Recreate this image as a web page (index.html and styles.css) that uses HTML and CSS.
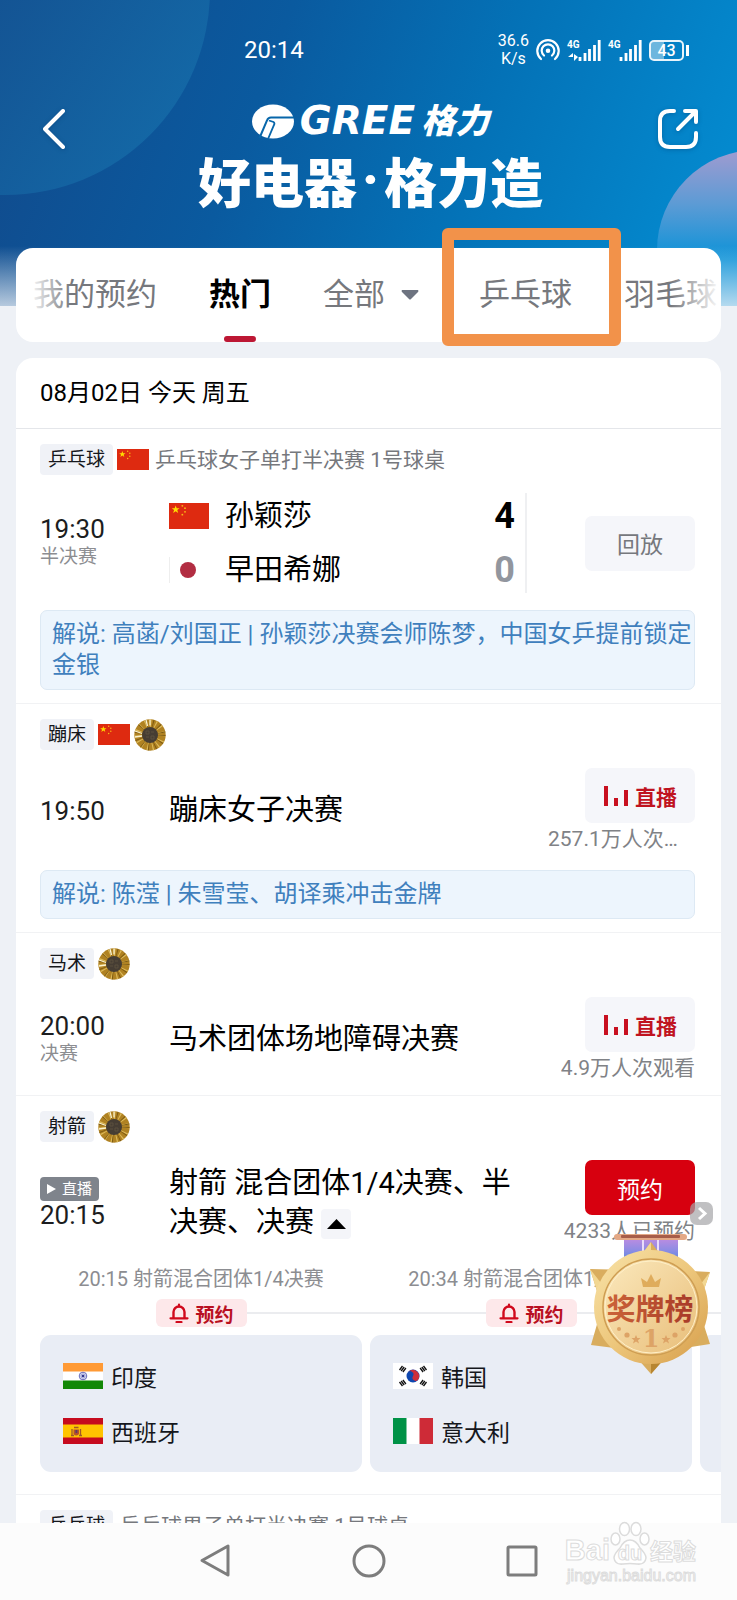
FILE: index.html
```html
<!DOCTYPE html>
<html lang="zh-CN">
<head>
<meta charset="utf-8">
<meta name="viewport" content="width=device-width, initial-scale=1">
<title>赛程</title>
<link rel="stylesheet" href="styles.css">
</head>
<body>
<svg class="defs" aria-hidden="true">
  <defs>
    <symbol id="flag-cn" viewBox="0 0 30 20" preserveAspectRatio="none">
      <rect width="30" height="20" fill="#de2a10"/>
      <path fill="#ffde00" d="M5 2l.75 2.1h2.2L6.2 5.4l.65 2.2L5 6.3 3.150 7.6l.65-2.200L2.050 4.100h2.200z"/>
      <circle cx="10" cy="2.200" r=".7" fill="#f9b616"/><circle cx="12" cy="4" r=".7" fill="#f9b616"/><circle cx="12" cy="6.800" r=".7" fill="#f9b616"/><circle cx="10" cy="9" r=".7" fill="#f9b616"/>
    </symbol>
    <symbol id="flag-jp" viewBox="0 0 40 26">
      <rect width="40" height="26" fill="#fff"/><path d="M.5 0v26" stroke="#eee"/><circle cx="19" cy="13" r="8" fill="#b22d42"/>
    </symbol>
    <symbol id="flag-in" viewBox="0 0 40 26">
      <rect width="40" height="26" fill="#fff"/><rect width="40" height="8.500" fill="#ff9a35"/><rect y="17.500" width="40" height="8.500" fill="#128807"/>
      <circle cx="20" cy="13" r="3.800" fill="#dfe2f5" stroke="#5c60b5" stroke-width=".9"/><path d="M20 9.500v7M16.500 13h7M17.500 10.500l5 5M22.500 10.500l-5 5" stroke="#6a6ebc" stroke-width=".5"/><circle cx="20" cy="13" r="1.300" fill="#33378f"/>
    </symbol>
    <symbol id="flag-es" viewBox="0 0 40 26">
      <rect width="40" height="26" fill="#ffc400"/><rect width="40" height="6.500" fill="#c60b1e"/><rect y="19.500" width="40" height="6.500" fill="#c60b1e"/>
      <path d="M10.500 11.500h5.500v4.500q-2.800 3-5.500 0z" fill="#b5502c"/><path d="M11 9.500h4.500M9 11v7M17.500 11v7M8 17.500h3M16 17.500h3" stroke="#a0582a" stroke-width="1.300"/><rect x="12.500" y="12" width="1.800" height="3" fill="#5a3b6b"/>
    </symbol>
    <symbol id="flag-kr" viewBox="0 0 40 26">
      <rect width="40" height="26" fill="#fff"/>
      <circle cx="20" cy="13" r="6.500" fill="#0f47af"/><path d="M14.600 9.400A6.500 6.500 0 0 1 25.400 16.600A3.250 3.250 0 0 1 20 13A3.250 3.250 0 0 0 14.600 9.400" fill="#cd2e3a"/>
      <g stroke="#111" stroke-width="1.300"><path d="M6.500 7l3-4M8.200 8l3-4M9.900 9l3-4"/><path d="M27.100 5l3 4M28.800 4l3 4M30.500 3l3 4M6.500 19l3 4M8.200 18l3 4M9.900 17l3 4M27.100 21l3-4M28.800 22l3-4M30.500 23l3-4"/></g>
    </symbol>
    <symbol id="flag-it" viewBox="0 0 40 26">
      <rect width="40" height="26" fill="#fff"/><rect width="13.500" height="26" fill="#009246"/><rect x="26.500" width="13.500" height="26" fill="#ce2b37"/>
    </symbol>
    <symbol id="gold" viewBox="0 0 32 32">
      <circle cx="16" cy="16" r="15.700" fill="#b08222"/>
      <g fill="none" stroke-width="9"><circle cx="16" cy="16" r="11" stroke="#dcb95a" stroke-dasharray="1 3.700"/><circle cx="16" cy="16" r="11" stroke="#7d5a12" stroke-dasharray=".8 5.200"/><path d="M16 .5v6M12 1l1.500 6M1 12l7 2.500M1 18l7-1" stroke="#fbf3cf" stroke-width="1.300"/></g>
      <circle cx="16" cy="16" r="8" fill="#463d33"/><path d="M12 12h3v3h-3zM17 13h3M12 18h3M17 17h3v3h-3z" fill="none" stroke="#5d5240" stroke-width=".9"/>
    </symbol>
    <symbol id="bell" viewBox="0 0 20 20">
      <path d="M4.500 15V9a5.500 5.500 0 0 1 11 0v6" fill="none" stroke="#d0091c" stroke-width="2.400"/><path d="M1.500 15.300h17" stroke="#d0091c" stroke-width="2.200" stroke-linecap="round"/><path d="M10 1.500v2M7.500 19h5" stroke="#d0091c" stroke-width="2.200" stroke-linecap="round"/>
    </symbol>
    <symbol id="bars" viewBox="0 0 26 22">
      <path d="M3 1v20M13 13v8M23 5v16" stroke="#c8101f" stroke-width="4"/>
    </symbol>
  </defs>
</svg>

<div class="screen">
  <header class="hero">
    <svg class="hero-art" viewBox="0 0 737 306" preserveAspectRatio="xMaxYMin slice" aria-hidden="true">
      <defs>
        <linearGradient id="sky" gradientUnits="userSpaceOnUse" x1="0" y1="80" x2="660" y2="330"><stop offset="0" stop-color="#114b8d"/><stop offset=".35" stop-color="#0a5a9f"/><stop offset=".65" stop-color="#0471b6"/><stop offset="1" stop-color="#0489ce"/></linearGradient>
        <linearGradient id="disc" x1="0" y1="0" x2="1" y2=".7"><stop offset=".5" stop-color="#145292"/><stop offset="1" stop-color="#156ba8"/></linearGradient>
        <linearGradient id="bubble" gradientUnits="userSpaceOnUse" x1="0" y1="150" x2="0" y2="260"><stop offset="0" stop-color="#a09bd0"/><stop offset=".5" stop-color="#5b9bd5"/><stop offset="1" stop-color="#0a92d8"/></linearGradient>
        <linearGradient id="fade" x1="0" y1="0" x2="0" y2="1"><stop offset="0" stop-color="#eef2f7" stop-opacity="0"/><stop offset="1" stop-color="#eef2f7" stop-opacity=".75"/></linearGradient>
      </defs>
      <rect width="737" height="306" fill="url(#sky)"/>
      <circle cx="5" cy="-10" r="205" fill="url(#disc)" opacity=".85"/>
      <circle cx="757" cy="250" r="100" fill="url(#bubble)"/>
      <rect y="246" width="737" height="60" fill="url(#fade)"/>
    </svg>
    <div class="status">
      <time>20:14</time>
      <div class="status-icons">
        <span class="speed">36.6<br>K/s</span>
        <svg width="24" height="22" viewBox="0 0 24 22" fill="none" stroke="#fff" stroke-width="2.200" stroke-linecap="round"><path d="M5 20a10.700 10.700 0 1 1 14 0M8 16.500a6.300 6.300 0 1 1 8 0"/><circle cx="12" cy="11.700" r="1.200" fill="#fff"/></svg>
        <span class="signal"><span>4G</span><svg width="34" height="21" viewBox="0 0 34 21" stroke="#fff" stroke-width="2.800"><path d="M13 17v4M18 13v8M22.500 9v12M27.500 5v16M32.200 0v21"/><path d="M1 17h5V13zM7 21V14l4 3z" fill="#fff" stroke="none"/></svg></span>
        <span class="signal"><span>4G</span><svg width="34" height="21" viewBox="0 0 34 21" stroke="#fff" stroke-width="2.800"><path d="M13 17v4M18 13v8M22.500 9v12M27.500 5v16M32.200 0v21"/></svg></span>
        <span class="battery">43</span>
      </div>
    </div>
    <div class="titlebar">
      <button class="icon-btn" aria-label="返回"><svg width="24" height="42" viewBox="0 0 24 42" fill="none" stroke="#fff" stroke-width="4" stroke-linecap="round" stroke-linejoin="round"><path d="M21 3L3 21l18 18"/></svg></button>
      <div class="brand">
        <div class="brand-top">
          <svg width="42" height="35" viewBox="0 0 42 35"><ellipse cx="21" cy="17.500" rx="21" ry="17" fill="#fff"/><path d="M42 13.500H19q-3 0-4 3L7.500 34" fill="none" stroke="#0766aa" stroke-width="2"/><path d="M17 16.500l4.500 1.500q1.500 1 .5 3L16 35" fill="none" stroke="#0766aa" stroke-width="1.800"/></svg>
          <span class="gree">GREE</span><span class="geli">格力</span>
        </div>
        <div class="slogan">好电器<span class="dot">·</span>格力造</div>
      </div>
      <button class="icon-btn" aria-label="分享"><svg width="42" height="42" viewBox="0 0 42 42" fill="none" stroke="#fff" stroke-width="4" stroke-linecap="round" stroke-linejoin="round"><path d="M17 3h-4Q3 3 3 13v16q0 10 10 10h16q10 0 10-10v-4M21 21L38 4M28 3h11v11"/></svg></button>
    </div>
  </header>

  <main class="content">
    <nav class="tabs" aria-label="项目">
      <button class="tab">我的预约</button>
      <button class="tab active">热门</button>
      <button class="tab tab-all">全部<svg width="18" height="10" viewBox="0 0 18 10"><path d="M1 0h16q1 1 0 2l-7 7q-1 1-2 0L1 2Q0 1 1 0" fill="#6d7380"/></svg></button>
      <button class="tab marked">乒乓球</button>
      <button class="tab">羽毛球</button>
    </nav>

    <section class="list">
      <h1 class="date">08月02日 今天 周五</h1>

      <article class="event">
        <div class="meta"><span class="tag">乒乓球</span><svg class="mini-flag"><use href="#flag-cn"/></svg><span class="desc">乒乓球女子单打半决赛 1号球桌</span></div>
        <div class="body">
          <div class="when"><time>19:30</time><small>半决赛</small></div>
          <div class="match">
            <div class="player"><svg class="flag"><use href="#flag-cn"/></svg><span>孙颖莎</span><b>4</b></div>
            <div class="player lost"><svg class="flag"><use href="#flag-jp"/></svg><span>早田希娜</span><b>0</b></div>
          </div>
          <div class="side"><button class="action">回放</button></div>
        </div>
        <p class="note">解说: 高菡/刘国正 | 孙颖莎决赛会师陈梦，中国女乒提前锁定金银</p>
      </article>

      <article class="event">
        <div class="meta"><span class="tag">蹦床</span><svg class="mini-flag"><use href="#flag-cn"/></svg><svg class="gold"><use href="#gold"/></svg></div>
        <div class="body">
          <div class="when"><time>19:50</time></div>
          <h2 class="title">蹦床女子决赛</h2>
          <div class="side"><button class="action live"><svg width="26" height="22"><use href="#bars"/></svg>直播</button><span class="count">257.1万人次观看</span></div>
        </div>
        <p class="note">解说: 陈滢 | 朱雪莹、胡译乘冲击金牌</p>
      </article>

      <article class="event">
        <div class="meta"><span class="tag">马术</span><svg class="gold"><use href="#gold"/></svg></div>
        <div class="body">
          <div class="when"><time>20:00</time><small>决赛</small></div>
          <h2 class="title">马术团体场地障碍决赛</h2>
          <div class="side"><button class="action live"><svg width="26" height="22"><use href="#bars"/></svg>直播</button><span class="count">4.9万人次观看</span></div>
        </div>
      </article>

      <article class="event event-open">
        <div class="meta"><span class="tag">射箭</span><svg class="gold"><use href="#gold"/></svg></div>
        <div class="body">
          <div class="when"><span class="live-badge"><svg width="9" height="10" viewBox="0 0 9 10"><path d="M0 0l9 5-9 5z" fill="#fff"/></svg>直播</span><time>20:15</time></div>
          <h2 class="title">射箭 混合团体1/4决赛、半决赛、决赛 <button class="fold" aria-label="收起"><svg width="19" height="10" viewBox="0 0 19 10"><path d="M0 10L9.500 0 19 10z"/></svg></button></h2>
          <div class="side"><button class="action book">预约</button><span class="count">4233人已预约</span></div>
        </div>
        <div class="rounds">
          <div class="round">
            <div class="round-name">20:15 射箭混合团体1/4决赛</div>
            <div class="round-line first"><i></i><button class="remind"><svg width="20" height="20"><use href="#bell"/></svg>预约</button><i></i></div>
            <div class="teams"><div><svg class="flag"><use href="#flag-in"/></svg>印度</div><div><svg class="flag"><use href="#flag-es"/></svg>西班牙</div></div>
          </div>
          <div class="round">
            <div class="round-name">20:34 射箭混合团体1/4决赛</div>
            <div class="round-line"><i></i><button class="remind"><svg width="20" height="20"><use href="#bell"/></svg>预约</button><i></i></div>
            <div class="teams"><div><svg class="flag"><use href="#flag-kr"/></svg>韩国</div><div><svg class="flag"><use href="#flag-it"/></svg>意大利</div></div>
          </div>
          <div class="round">
            <div class="round-name"></div>
            <div class="round-line"><i></i><i></i></div>
            <div class="teams"></div>
          </div>
        </div>
      </article>

      <article class="event">
        <div class="meta"><span class="tag">乒乓球</span><span class="desc">乒乓球男子单打半决赛 1号球桌</span></div>
      </article>
    </section>

    <button class="hide-float" aria-label="收起悬浮"><svg width="23" height="23" viewBox="0 0 23 23"><path d="M9 6l6 5.500L9 17" fill="none" stroke="#fff" stroke-width="3"/></svg></button>
    <a class="medal" href="#" aria-label="奖牌榜">
      <svg width="124" height="144" viewBox="0 0 124 144">
        <defs>
          <linearGradient id="rib" x1="0" y1="0" x2="0" y2="1"><stop offset="0" stop-color="#c78ce0"/><stop offset=".5" stop-color="#8a8ce4"/><stop offset="1" stop-color="#3e7fdb"/></linearGradient>
          <linearGradient id="rim" x1="0" y1="0" x2="1" y2="1"><stop offset="0" stop-color="#f8e3a8"/><stop offset=".5" stop-color="#edc77c"/><stop offset="1" stop-color="#d69d4a"/></linearGradient>
          <linearGradient id="face" x1="0" y1="0" x2="1" y2="1"><stop offset="0" stop-color="#fbe9bd"/><stop offset="1" stop-color="#e8bd78"/></linearGradient>
          <linearGradient id="ink" x1="0" y1="0" x2="1" y2="0"><stop offset="0" stop-color="#cb6338"/><stop offset="1" stop-color="#a83a28"/></linearGradient>
        </defs>
        <path d="M36 4h54v30H36z" fill="url(#rib)"/><path d="M55 4v24M70 4v24" stroke="#e9dcfa" stroke-width="2"/>
        <rect x="26" y="2" width="73" height="6" rx="3" fill="#e3a885"/><rect x="33" y="3" width="59" height="3" rx="1" fill="#a75d49"/>
        <path d="M63 10L84 38l38 2-12 35 12 37-38 6-21 24-21-24-39-5 11-38L2 37l40 1z" fill="#d9ad5e"/>
        <path d="M63 10v40L42 38zM122 40L95 75l15 0zM2 37l30 38H14z" fill="#f2d792"/><path d="M63 142v-30l21 6z" fill="#b78632"/>
        <circle cx="63" cy="75" r="57" fill="url(#rim)"/><circle cx="63" cy="75" r="48" fill="url(#face)" stroke="#cf9e52" stroke-width="1.500"/><circle cx="63" cy="75" r="46" fill="none" stroke="#fff0c8"/>
        <path d="M55 55l-2-9 6 4 4-8 4 8 6-4-2 9z" fill="#dfac5c"/>
        <g fill="#dda366"><path d="M48 103l1.300 3h3.200l-2.500 2.200 1 3.300-3-1.900-3 1.900 1-3.300-2.500-2.200h3.200zM78 103l1.300 3h3.200l-2.500 2.200 1 3.300-3-1.900-3 1.900 1-3.300-2.500-2.200h3.200z"/><circle cx="39" cy="103" r="2.600"/><circle cx="87" cy="103" r="2.600"/><circle cx="31" cy="97" r="2"/><circle cx="95" cy="97" r="2"/></g>
        <text x="63" y="115" class="medal-rank">1</text>
        <text x="62" y="88" class="medal-text" fill="url(#ink)">奖牌榜</text>
      </svg>
    </a>
  </main>

  <footer class="sysnav">
    <button aria-label="后退"><svg width="34" height="36" viewBox="0 0 34 36"><path d="M29 3v29L3 17.500z"/></svg></button>
    <button aria-label="主页"><svg width="34" height="36" viewBox="0 0 34 36"><circle cx="17" cy="18" r="15"/></svg></button>
    <button aria-label="最近任务"><svg width="34" height="36" viewBox="0 0 34 36"><rect x="3" y="4" width="28" height="28" rx="1"/></svg></button>
    <div class="watermark" aria-hidden="true">
      <div class="wm-top"><span>Bai</span><span class="paw"><svg width="40" height="46" viewBox="0 0 40 46" fill="#fff" stroke="#dcdcdc" stroke-width="1.500"><ellipse cx="5.500" cy="18" rx="4.500" ry="6"/><ellipse cx="14.500" cy="8" rx="5" ry="6.500"/><ellipse cx="26" cy="8" rx="5" ry="6.500"/><ellipse cx="34.500" cy="18" rx="4.500" ry="6"/><path d="M20 19q6 0 10 8 6 6 6 10-1 7-9 6-7-1-14 0-8 1-9-6 0-4 6-10 4-8 10-8z"/></svg><em>du</em></span><span class="wm-cn">经验</span></div>
      <div class="wm-url">jingyan.baidu.com</div>
    </div>
  </footer>
</div>
</body>
</html>
```
FILE: styles.css
```css
* { box-sizing: border-box; margin: 0; padding: 0; }
body { font-family: Roboto, "Noto Sans CJK SC", sans-serif; color: #000; background: #eef1f6; }
button { border: 0; background: none; font: inherit; color: inherit; cursor: pointer; }
svg { display: block; flex: none; }
.defs { position: absolute; width: 0; height: 0; }

.screen { position: relative; display: flex; flex-direction: column; height: 100vh; overflow: hidden; background: #eef1f6; }

/* Header banner */
.hero { position: relative; flex: none; height: 248px; color: #fff; }
.hero-art { position: absolute; top: 0; left: 0; width: 100%; height: 306px; }
.status { position: relative; display: flex; justify-content: space-between; align-items: center; padding: 32px 53px 0 244px; }
.status time { font-size: 24px; line-height: 36px; }
.status-icons { display: flex; align-items: center; gap: 7px; }
.speed { font-size: 16px; line-height: 18px; text-align: center; }
.signal { position: relative; }
.signal span { position: absolute; top: -1px; left: 0; font-size: 10px; line-height: 11px; font-weight: 700; }
.battery { position: relative; width: 35px; height: 21px; border: 2px solid #e8f4fb; border-radius: 5px; font-size: 16px; line-height: 17px; font-weight: 500; text-align: center; background: linear-gradient(90deg, #6cb6de 43%, transparent 43%); }
.battery::after { content: ""; position: absolute; top: 3px; right: -7px; width: 3px; height: 11px; background: #fff; }
.titlebar { position: relative; display: flex; justify-content: space-between; padding: 30px 38px 0 42px; }
.icon-btn { align-self: flex-start; width: 42px; padding-top: 10px; filter: drop-shadow(0 1px 2px rgba(0, 40, 90, .3)); }
.brand { display: flex; flex-direction: column; align-items: center; }
.brand-top { display: flex; align-items: center; height: 46px; gap: 6px; }
.gree { font: italic 700 39px/46px "DejaVu Sans", sans-serif; }
.geli { font-size: 34px; line-height: 46px; font-weight: 900; font-style: italic; }
.slogan { display: flex; margin-top: 8px; font-family: "Noto Sans CJK SC", sans-serif; font-size: 53px; line-height: 56px; font-weight: 900; white-space: nowrap; }
.dot { padding: 0 5px; font-family: Roboto, sans-serif; }

/* Category tabs */
.content { position: relative; flex: 1; min-height: 0; display: flex; flex-direction: column; gap: 16px; padding: 0 16px; }
.tabs { position: relative; flex: none; display: flex; align-items: center; gap: 52px; height: 94px; padding-left: 17px; border-radius: 17px; background: #fff; }
.tab { position: relative; height: 94px; font-size: 31px; line-height: 94px; color: #76787d; white-space: nowrap; }
.tab.active { color: #000; font-weight: 700; }
.tab.active::after { content: ""; position: absolute; bottom: 0; left: 15px; width: 32px; height: 6px; border-radius: 3px; background: #bd1734; }
.tab-all { display: flex; align-items: center; gap: 16px; margin-right: 8px; }
.tabs::before, .tabs::after { content: ""; position: absolute; z-index: 1; top: 20px; bottom: 20px; width: 50px; pointer-events: none; }
.tabs::before { left: 5px; background: linear-gradient(90deg, #fff 15%, transparent); }
.tabs::after { right: 0; background: linear-gradient(270deg, #fff, transparent); }
.marked::after { content: ""; position: absolute; z-index: 2; inset: -20px -49px -4px -37px; border: 12px solid #f2924a; border-radius: 6px; }

/* Event list */
.list { flex: 1; min-height: 0; overflow: hidden; border-radius: 17px 17px 0 0; background: #fff; }
.date { padding-left: 24px; font-size: 24px; line-height: 70px; font-weight: 400; border-bottom: 1px solid #e4e6ea; }
.event { padding: 15px 26px 13px 24px; border-bottom: 1px solid #f1f2f4; }
.event-open { padding-bottom: 22px; }
.meta { display: flex; align-items: center; gap: 4px; height: 31px; }
.tag { padding: 0 8px; border-radius: 4px; background: #f0f2f7; font-size: 19px; line-height: 31px; color: #15171c; }
.mini-flag { width: 32px; height: 21px; }
.gold { width: 32px; height: 32px; }
.desc { padding-left: 2px; font-size: 21px; line-height: 28px; color: #76787d; white-space: nowrap; }
.body { display: grid; grid-template-columns: 129px 1fr 168px; align-items: center; margin-top: 18px; }
.when { display: flex; flex-direction: column; align-items: flex-start; }
.when time { font-size: 26px; line-height: 28px; color: #1c1d20; }
.when small { font-size: 19px; line-height: 28px; color: #8c8d91; }
.live-badge { display: flex; align-items: center; gap: 6px; padding: 0 7px; border-radius: 4px; background: #7f848c; color: #fff; font-size: 15px; line-height: 24px; }
.title { font-size: 29px; line-height: 39px; font-weight: 400; }
.fold { display: inline-grid; place-items: center; width: 30px; height: 30px; border-radius: 4px; background: #f4f5f9; vertical-align: middle; }
.match { display: flex; flex-direction: column; gap: 8px; padding-right: 10px; border-right: 2px solid #eff0f2; }
.player { display: flex; align-items: center; gap: 16px; font-size: 29px; line-height: 46px; }
.player b { margin-left: auto; font-family: "Liberation Sans Narrow", Roboto, sans-serif; font-size: 36px; font-weight: 700; }
.lost b { color: #92969e; }
.flag { width: 40px; height: 26px; }
.side { display: flex; flex-direction: column; align-items: flex-end; gap: 2px; }
.action { display: flex; align-items: center; justify-content: center; gap: 6px; width: 110px; height: 55px; border-radius: 7px; background: #f5f6fa; font-size: 23px; color: #76787d; }
.live { font-size: 21px; font-weight: 700; color: #c0131f; }
.book { background: #d7000f; color: #fff; }
.count { max-width: 147px; overflow: hidden; text-overflow: ellipsis; white-space: nowrap; font-size: 21px; line-height: 28px; color: #808286; }
.note { margin-top: 17px; padding: 8px 0 8px 11px; border: 1px solid #dde9f4; border-radius: 7px; background: #edf5fd; font-size: 24px; line-height: 31px; color: #4080bd; }

/* Rounds of an expanded event */
.rounds { display: flex; gap: 8px; margin: 20px -26px 0 0; overflow: hidden; }
.round { flex: 0 0 322px; }
.round-name { height: 28px; font-size: 20px; line-height: 28px; text-align: center; color: #8c8d91; }
.round-line { display: flex; align-items: center; height: 28px; margin: 6px -8px 8px 0; }
.round-line i { flex: 1; height: 2px; background: #ebecef; }
.round-line i:first-child { flex: 0 0 116px; }
.round-line.first i:first-child { background: none; }
.remind { display: flex; align-items: center; justify-content: center; gap: 6px; width: 91px; height: 28px; border-radius: 6px; background: #fde8ea; font-size: 19px; font-weight: 700; color: #b9101f; }
.teams { height: 137px; padding: 13px 23px; border-radius: 11px; background: #e9edf5; font-size: 23px; color: #15171c; }
.teams div { display: flex; align-items: center; gap: 8px; height: 55px; }

/* Floating medal table link */
.hide-float { position: absolute; top: 954px; right: 24px; width: 23px; height: 23px; border-radius: 7px; background: rgba(165, 165, 168, .7); }
.medal { position: absolute; top: 984px; right: 25px; }
.medal-text { font: 700 29px "Noto Sans CJK SC", sans-serif; text-anchor: middle; }
.medal-rank { font: 700 24px "DejaVu Serif", serif; text-anchor: middle; fill: #dda366; }

/* System navigation */
.sysnav { position: relative; z-index: 1; flex: none; display: flex; justify-content: center; gap: 119px; height: 77px; padding-top: 20px; background: #fcfcfc; }
.sysnav button { align-self: flex-start; }
.sysnav button svg { fill: none; stroke: #7d7d7d; stroke-width: 3; stroke-linejoin: round; }
.watermark { position: absolute; right: 41px; bottom: 16px; color: #fff; -webkit-text-stroke: 1px #dcdcdc; }
.wm-top { display: flex; align-items: flex-end; height: 46px; font: 700 29px/34px "Liberation Sans", sans-serif; }
.paw { position: relative; }
.paw em { position: absolute; inset: 18px 0 0 0; font-style: normal; font-size: 20px; line-height: 28px; text-align: center; }
.wm-cn { font-family: "Noto Sans CJK SC", sans-serif; font-size: 23px; }
.wm-url { font: 16px/17px "Liberation Sans", sans-serif; text-align: right; }
```
